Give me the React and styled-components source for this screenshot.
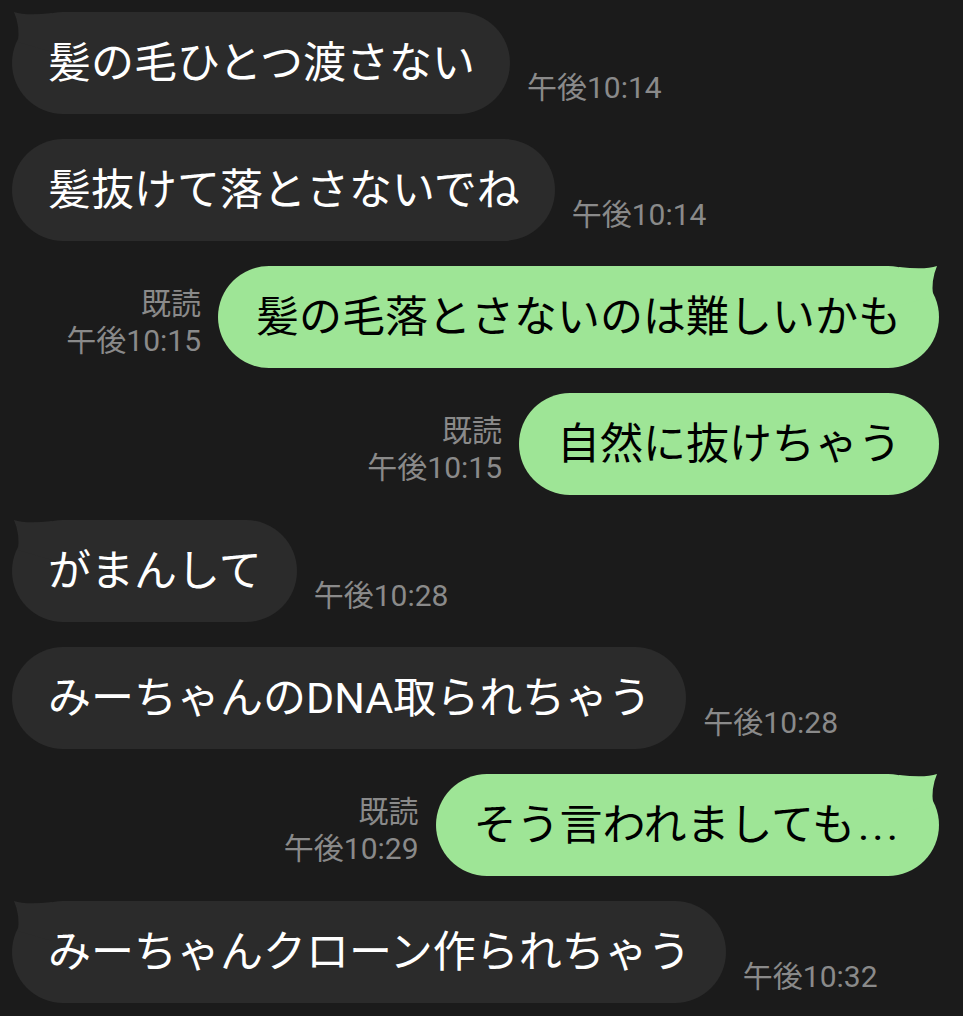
import styled, { createGlobalStyle, css } from 'styled-components';

const GlobalStyle = createGlobalStyle`
  html, body {
    margin: 0;
    background: #1b1b1b;
  }
`;

const messages = [
  { side: 'left', text: '髪の毛ひとつ渡さない', time: '午後10:14', tail: true },
  { side: 'left', text: '髪抜けて落とさないでね', time: '午後10:14' },
  { side: 'right', text: '髪の毛落とさないのは難しいかも', time: '午後10:15', tail: true },
  { side: 'right', text: '自然に抜けちゃう', time: '午後10:15' },
  { side: 'left', text: 'がまんして', time: '午後10:28', tail: true },
  { side: 'left', text: 'みーちゃんのDNA取られちゃう', time: '午後10:28' },
  { side: 'right', text: 'そう言われましても', dots: true, time: '午後10:29', tail: true },
  { side: 'left', text: 'みーちゃんクローン作られちゃう', time: '午後10:32', tail: true },
];

const Chat = styled.div`
  display: flex;
  flex-direction: column;
  gap: 25px;
  padding: 12px 24px 0 12px;
  font-family: Roboto, 'Noto Sans CJK JP', sans-serif;
`;

const Row = styled.div`
  display: flex;
  align-items: flex-end;
  gap: 17px;
  justify-content: ${(p) => (p.$side === 'right' ? 'flex-end' : 'flex-start')};
`;

const tailShape = css`
  &::before {
    content: '';
    position: absolute;
    top: 0;
    width: 40px;
    height: 40px;
    background: inherit;
    clip-path: path('M0 1 Q26 4 38 0 Q32 14 34 30 L0 40 Z');
    ${(p) =>
      p.$side === 'right'
        ? css`right: 0;`
        : css`left: 0; transform: scaleX(-1);`}
  }
`;

const Bubble = styled.div`
  position: relative;
  box-sizing: border-box;
  height: 102px;
  display: flex;
  align-items: center;
  border-radius: 51px;
  font-size: 43px;
  line-height: 60px;
  white-space: nowrap;
  padding: ${(p) => (p.$side === 'right' ? '0 38px' : '0 35px 0 36px')};
  background: ${(p) => (p.$side === 'right' ? '#9ee596' : '#2b2b2b')};
  color: ${(p) => (p.$side === 'right' ? '#000' : '#fff')};
  ${(p) => p.$tail && tailShape}
`;

const Dots = styled.span`
  letter-spacing: 3px;
  margin-left: 3px;
`;

const Meta = styled.div`
  display: flex;
  flex-direction: column;
  align-items: flex-end;
  color: #8a8a8a;
  font-size: 30px;
  line-height: 37px;
  margin-bottom: ${(p) => (p.$side === 'right' ? '9px' : '8px')};
  white-space: nowrap;
`;

export default function App() {
  return (
    <>
      <GlobalStyle />
      <Chat>
        {messages.map((m, i) => (
          <Row key={i} $side={m.side}>
            {m.side === 'right' && (
              <Meta $side="right">
                <span>既読</span>
                <span>{m.time}</span>
              </Meta>
            )}
            <Bubble $side={m.side} $tail={m.tail}>
              {m.text}
              {m.dots && <Dots>...</Dots>}
            </Bubble>
            {m.side === 'left' && (
              <Meta $side="left">
                <span>{m.time}</span>
              </Meta>
            )}
          </Row>
        ))}
      </Chat>
    </>
  );
}
